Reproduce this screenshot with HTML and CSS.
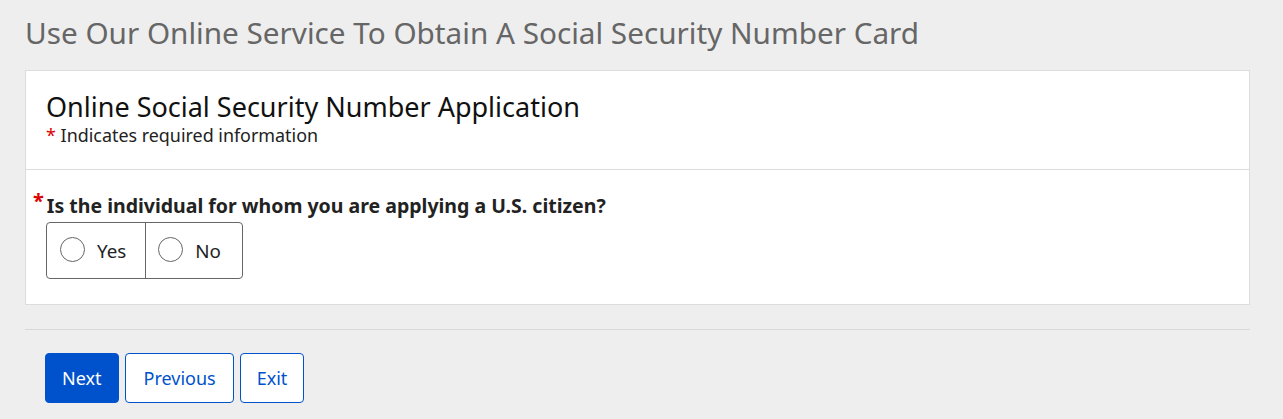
FILE: index.html
```html
<!DOCTYPE html>
<html lang="en">
<head>
  <meta charset="UTF-8">
  <meta name="viewport" content="width=device-width, initial-scale=1.0">
  <title>Online Social Security Number Application</title>
  <link rel="stylesheet" href="styles.css">
</head>
<body>
  <div class="page">
    <h1 class="page-title">Use Our Online Service To Obtain A Social Security Number Card</h1>

    <div class="card">
      <div class="card-header">
        <h2>Online Social Security Number Application</h2>
        <p class="req-note"><span class="star">*</span> Indicates required information</p>
      </div>
      <div class="card-body">
        <div class="question">
          <span class="star">*</span>Is the individual for whom you are applying a U.S. citizen?
        </div>
        <div class="choice-group">
          <label class="choice"><input type="radio" name="citizen" value="yes"><span>Yes</span></label>
          <label class="choice"><input type="radio" name="citizen" value="no"><span>No</span></label>
        </div>
      </div>
    </div>

    <hr class="divider">

    <div class="actions">
      <button class="btn btn-primary">Next</button>
      <button class="btn btn-wide">Previous</button>
      <button class="btn">Exit</button>
    </div>
  </div>
</body>
</html>
```

FILE: styles.css
```css
body {
  margin: 0;
  padding: 0;
  background: #eeeeee;
  font-family: 'Noto Sans', 'Open Sans', sans-serif;
  color: #222;
}
.page {
  padding: 0 33px 0 25px;
}
.page-title {
  margin: 0;
  padding: 13px 0 17px;
  font-size: 29.7px;
  font-weight: normal;
  color: #666;
  line-height: 40px;
  white-space: nowrap;
}
.card {
  background: white;
  border: 1px solid #dcdcdc;
}
.card-header {
  padding: 18px 20px 24px;
  border-bottom: 1px solid #dcdcdc;
}
.card-header h2 {
  margin: 0;
  font-size: 27px;
  font-weight: normal;
  line-height: 36px;
  color: #111;
}
.req-note {
  margin: 0;
  font-size: 17.9px;
  line-height: 20px;
  color: #222;
}
.star {
  color: #d00;
  font-size: 20px;
  margin-right: 2px;
}
.req-note .star {
  font-size: 18px;
  margin-right: 0;
}
.card-body {
  padding: 20px 20px 25px 7px;
}
.question {
  font-size: 19.5px;
  font-weight: bold;
  line-height: 32px;
  color: #222;
  white-space: nowrap;
}
.question .star {
  display: inline-block;
  vertical-align: top;
  line-height: 14px;
  margin: 4px 3px 0 0;
}
.choice-group {
  display: inline-flex;
  margin-left: 13px;
  border: 1px solid #666;
  border-radius: 4px;
}
.choice {
  display: flex;
  align-items: center;
  height: 55px;
  padding: 0 19px 0 13px;
  font-size: 18.8px;
  color: #222;
}
.choice + .choice {
  border-left: 1px solid #666;
  padding: 0 21px 0 12px;
}
.choice input {
  appearance: none;
  width: 25px;
  height: 25px;
  margin: 0 12px 2px 0;
  border: 1px solid #666;
  border-radius: 50%;
  background: white;
}
.divider {
  border: none;
  border-top: 1px solid #d8d8d8;
  margin: 24px 0 23px;
}
.actions {
  display: flex;
  gap: 6px;
  padding-left: 20px;
}
.btn {
  height: 50px;
  padding: 0 16px;
  font-family: inherit;
  font-size: 18px;
  color: #0052cc;
  background: white;
  border: 1px solid #0052cc;
  border-radius: 4px;
}
.btn-wide {
  padding: 0 17px 0 18px;
}
.btn-primary {
  background: #0052cc;
  color: white;
}
```
